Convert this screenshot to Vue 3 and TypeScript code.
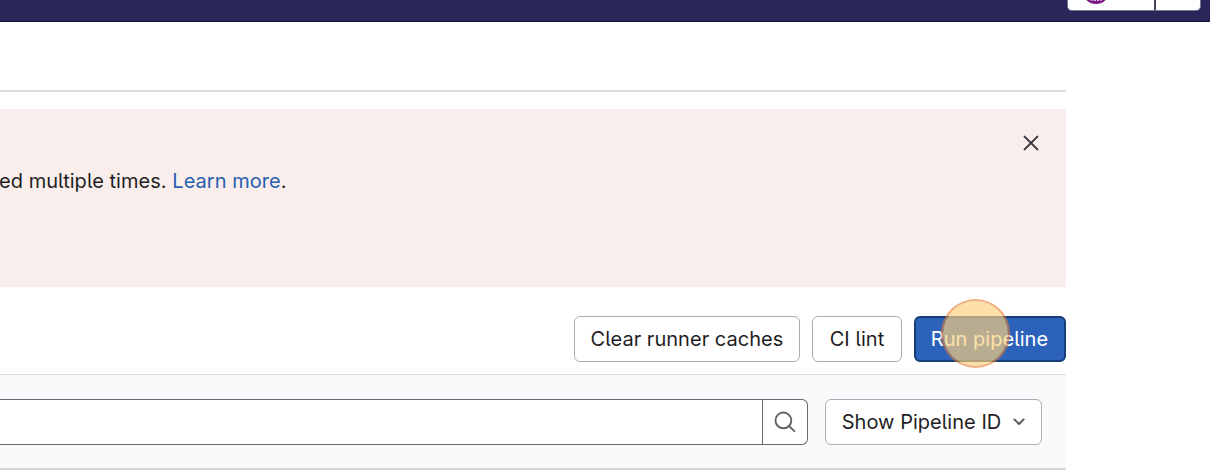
<script setup lang="ts">
const actions: { label: string; kind: string }[] = [
  { label: 'Clear runner caches', kind: 'clear' },
  { label: 'CI lint', kind: 'lint' },
]
</script>

<template>
  <div class="page">
    <header class="topbar">
      <div class="account">
        <div class="account-main">
          <svg class="avatar" width="28" height="28" viewBox="0 0 28 28">
            <circle cx="14" cy="14" r="14" fill="#7b1687" />
            <path d="M8.5 23.6h2.6M12.2 24.2h1.5M15.2 24.2h1.5M18 23.6h2" stroke="#fff" stroke-width="1.8" />
          </svg>
        </div>
        <div class="account-more"></div>
      </div>
    </header>
    <main class="content">
      <div class="rule"></div>
      <section class="alert">
        <p class="message">ed multiple times. <a class="link">Learn more</a>.</p>
        <svg class="close" width="16" height="16" viewBox="0 0 16 16">
          <path d="M1.6 1.6l12.8 12.8M14.4 1.6L1.6 14.4" fill="none" stroke="#38363d" stroke-width="2" stroke-linecap="round" />
        </svg>
      </section>
      <div class="actions">
        <button v-for="a in actions" :key="a.kind" class="btn" :class="a.kind"><span>{{ a.label }}</span></button>
        <button class="btn primary"><span>Run pipeline</span><i class="marker"></i></button>
      </div>
      <div class="filters">
        <div class="search">
          <div class="field"></div>
          <div class="search-btn">
            <svg width="22" height="22" viewBox="0 0 22 22" fill="none" stroke="#626168" stroke-width="1.9">
              <circle cx="9.4" cy="9.4" r="7.9" />
              <path d="M15 15l5.4 5.1" stroke-linecap="round" />
            </svg>
          </div>
        </div>
        <button class="btn show">
          <span>Show Pipeline ID</span>
          <svg class="chevron" width="12" height="8" viewBox="0 0 12 8">
            <path d="M1.3 1.4L6 6l4.7-4.6" fill="none" stroke="#55535a" stroke-width="1.9" stroke-linecap="round" stroke-linejoin="round" />
          </svg>
        </button>
      </div>
    </main>
  </div>
</template>

<style>
body {
  margin: 0;
  background: #fff;
}
</style>

<style scoped>
.page {
  box-sizing: border-box;
  width: 1210px;
  height: 474px;
  overflow: hidden;
  background: #fff;
  color: #1f1e24;
  font-family: Inter, "Liberation Sans", sans-serif;
  font-size: 20px;
  line-height: 28px;
  font-feature-settings: "cv05";
}
.page * {
  box-sizing: border-box;
}
.topbar {
  display: flex;
  justify-content: flex-end;
  height: 22px;
  padding-right: 9px;
  background: #29265b;
  border-bottom: 1px solid #161338;
}
.account {
  display: flex;
  width: 134px;
  height: 11px;
  background: #fff;
  border: 1px solid #77758f;
  border-top: 0;
  border-radius: 0 0 5px 5px;
  overflow: hidden;
}
.account-main {
  display: flex;
  align-items: flex-end;
  width: 88px;
  padding: 0 0 6px 14px;
  border-right: 2px solid #44425a;
}
.avatar {
  flex: none;
}
.content {
  width: 1066px;
}
.rule {
  height: 70px;
  border-bottom: 2px solid #dcdcde;
}
.alert {
  display: flex;
  justify-content: space-between;
  height: 178px;
  margin-top: 17px;
  padding: 26px 27px 0 0;
  background: #f9eeec;
}
.message {
  margin: 32px 0 0 -1px;
  letter-spacing: 0.04px;
  white-space: pre;
}
.link {
  color: #2860b0;
}
.close {
  display: block;
}
.actions {
  display: flex;
  justify-content: flex-end;
  gap: 12px;
  height: 87px;
  padding: 29px 0 12px;
}
.btn {
  display: flex;
  align-items: center;
  justify-content: center;
  height: 46px;
  margin: 0;
  padding: 0;
  border: 1px solid #aeadb3;
  border-radius: 6px;
  background: #fff;
  color: #1f1e24;
  font: inherit;
  font-feature-settings: "cv05";
  letter-spacing: 0.03px;
  white-space: nowrap;
}
.clear {
  width: 226px;
}
.lint {
  width: 90px;
}
.primary {
  position: relative;
  width: 152px;
  background: #2c62b9;
  border: 2px solid #153d76;
  color: #fff;
}
.primary span {
  margin-right: 1px;
}
.marker {
  position: absolute;
  left: 25px;
  top: -19px;
  width: 69px;
  height: 69px;
  border: 2px solid rgba(232, 125, 52, 0.62);
  border-radius: 50%;
  background: rgba(251, 209, 125, 0.68);
  background-clip: padding-box;
}
.filters {
  display: flex;
  height: 96px;
  padding: 24px 24px 0 0;
  border-top: 1px solid #dcdbe0;
  border-bottom: 2px solid #d8d8db;
  background: #fafafc;
}
.search {
  display: flex;
  flex: none;
  width: 808px;
  height: 46px;
  margin-right: 17px;
  border: 1px solid #68676d;
  border-left: 0;
  border-radius: 0 6px 6px 0;
  background: #fff;
}
.field {
  flex: 1;
}
.search-btn {
  display: flex;
  align-items: center;
  justify-content: center;
  width: 45px;
  border-left: 1px solid #68676d;
}
.show {
  flex: none;
  width: 217px;
  gap: 12px;
}
</style>
